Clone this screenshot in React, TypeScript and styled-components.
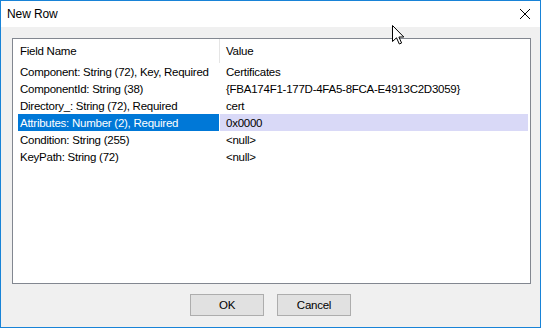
import React from 'react';
import styled, { createGlobalStyle } from 'styled-components';

const GlobalStyle = createGlobalStyle`
  html, body {
    margin: 0;
    padding: 0;
    background: #ffffff;
  }
  body {
    font-family: 'Liberation Sans', Arial, sans-serif;
    font-size: 11.5px;
    letter-spacing: -0.25px;
    color: #000;
  }
`;

const Window = styled.div`
  position: relative;
  width: 541px;
  height: 328px;
  box-sizing: border-box;
  border: 1px solid #1883d7;
  display: flex;
  flex-direction: column;
  background: #f0f0f0;
`;

const TitleBar = styled.div`
  height: 26px;
  flex-shrink: 0;
  display: flex;
  align-items: center;
  background: #ffffff;
  padding-left: 6px;
`;

const Title = styled.span`
  font-size: 12px;
  letter-spacing: -0.1px;
  color: #000;
`;

const CloseIcon = styled.svg`
  margin-left: auto;
  margin-right: 10px;
  width: 10px;
  height: 10px;
`;

const Client = styled.div`
  flex: 1;
  display: flex;
  flex-direction: column;
  padding: 11px 9px 0 11px;
`;

const ListBox = styled.div`
  height: 246px;
  box-sizing: border-box;
  border: 1px solid #828790;
  background: #ffffff;
  padding-left: 5px;
`;

const Header = styled.div`
  display: grid;
  grid-template-columns: 202px 1fr;
  height: 24px;
  align-items: stretch;
`;

const HeaderCell = styled.div<{ $sep?: boolean }>`
  display: flex;
  align-items: center;
  padding-left: ${({ $sep }) => ($sep ? '2px' : '6px')};
  border-right: ${({ $sep }) => ($sep ? '1px solid #e5e5e5' : 'none')};
`;

const Row = styled.div`
  display: grid;
  grid-template-columns: 201px 308px;
  column-gap: 1px;
  height: 17px;
`;

const Cell = styled.div<{ $first?: boolean; $selected?: boolean }>`
  display: flex;
  align-items: center;
  white-space: nowrap;
  overflow: hidden;
  padding-left: ${({ $first }) => ($first ? '2px' : '6px')};
  background: ${({ $first, $selected }) =>
    !$selected ? 'transparent' : $first ? '#0078d7' : '#d9d9f7'};
  color: ${({ $first, $selected }) => ($first && $selected ? '#ffffff' : '#000')};
`;

const ButtonBar = styled.div`
  display: flex;
  justify-content: center;
  gap: 13px;
  margin-top: 10px;
  padding-right: 2px;
`;

const Button = styled.button`
  width: 74px;
  height: 22px;
  box-sizing: border-box;
  background: #e1e1e1;
  border: 1px solid #adadad;
  font-family: inherit;
  font-size: 11.5px;
  letter-spacing: -0.25px;
  color: #000;
  padding: 0;
`;

const Cursor = styled.svg`
  position: absolute;
  left: 391px;
  top: 24px;
  width: 13px;
  height: 20px;
`;

const rows = [
  ['Component: String (72), Key, Required', 'Certificates'],
  ['ComponentId: String (38)', '{FBA174F1-177D-4FA5-8FCA-E4913C2D3059}'],
  ['Directory_: String (72), Required', 'cert'],
  ['Attributes: Number (2), Required', '0x0000'],
  ['Condition: String (255)', '<null>'],
  ['KeyPath: String (72)', '<null>'],
];

const App: React.FC = () => {
  return (
    <>
      <GlobalStyle />
      <Window>
        <TitleBar>
          <Title>New Row</Title>
          <CloseIcon viewBox="0 0 10 10">
            <path d="M0 0 L10 10 M10 0 L0 10" stroke="#000" strokeWidth="1" />
          </CloseIcon>
        </TitleBar>
        <Client>
          <ListBox>
            <Header>
              <HeaderCell $sep>Field Name</HeaderCell>
              <HeaderCell>Value</HeaderCell>
            </Header>
            {rows.map(([name, value], i) => (
              <Row key={name}>
                <Cell $first $selected={i === 3}>{name}</Cell>
                <Cell $selected={i === 3}>{value}</Cell>
              </Row>
            ))}
          </ListBox>
          <ButtonBar>
            <Button>OK</Button>
            <Button>Cancel</Button>
          </ButtonBar>
        </Client>
        <Cursor viewBox="0 0 13 20">
          <path
            d="M0.5 0.5 L0.5 16.5 L4.5 12.8 L7.3 19 L9.6 18 L6.9 12 L11.8 12 Z"
            fill="#fff"
            stroke="#000"
            strokeWidth="1"
            strokeLinejoin="miter"
          />
        </Cursor>
      </Window>
    </>
  );
};

export default App;
